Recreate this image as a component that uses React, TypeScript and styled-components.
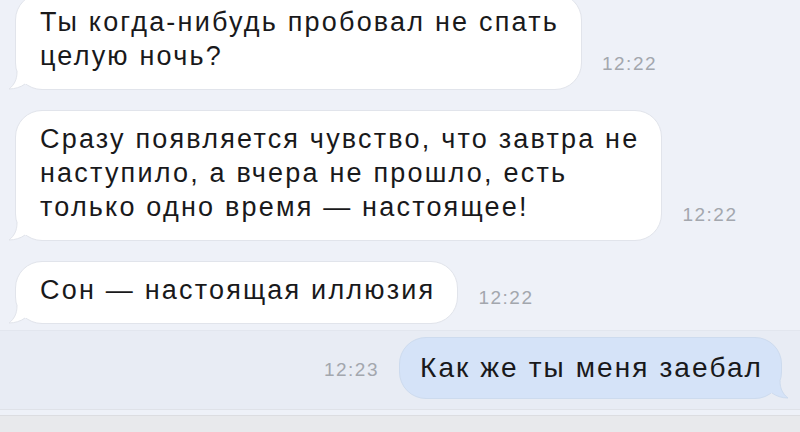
import React from "react";
import styled, { createGlobalStyle } from "styled-components";

const Global = createGlobalStyle`
  html, body { margin: 0; padding: 0; }
  body {
    background: #eef1f8;
    font-family: "Liberation Sans", Arial, sans-serif;
    color: #19191b;
  }
`;

const Screen = styled.div`
  width: 800px;
  height: 432px;
  overflow: hidden;
  display: flex;
  flex-direction: column;
  background: #eef1f8;
`;

const Feed = styled.div`
  display: flex;
  flex-direction: column;
  gap: 20px;
  margin-top: -7px;
  padding: 0 15px;
`;

const Row = styled.div<{ $out?: boolean }>`
  display: flex;
  align-items: flex-end;
  justify-content: ${(p) => (p.$out ? "flex-end" : "flex-start")};
  gap: 20px;
`;

const Bubble = styled.div<{ $out?: boolean }>`
  position: relative;
  background: ${(p) => (p.$out ? "#d5e3f8" : "#ffffff")};
  border: 1px solid ${(p) => (p.$out ? "#cddbee" : "#e1e4eb")};
  border-radius: 27px;
  padding: ${(p) => (p.$out ? "13px 18px 13px 20px" : "11px 22px 16px 24px")};
  font-size: ${(p) => (p.$out ? "28px" : "27px")};
  letter-spacing: ${(p) => (p.$out ? "2.1px" : "2.2px")};
  line-height: 34px;
  white-space: pre-line;
`;

const Tail = styled.svg<{ $out?: boolean }>`
  position: absolute;
  bottom: -1px;
  ${(p) => (p.$out ? "right: -8px; transform: scaleX(-1);" : "left: -8px;")}
  width: 22px;
  height: 18px;
`;

const Time = styled.span<{ $out?: boolean }>`
  font-size: 19px;
  color: #a3a7ae;
  margin-bottom: ${(p) => (p.$out ? "18px" : "15px")};
  letter-spacing: 1.5px;
`;

const OutBand = styled.div`
  margin-top: 6px;
  padding: 6px 18px 10px 15px;
  background: #e8ecf4;
  border-top: 1px solid #e2e6ee;
  border-bottom: 1px solid #dfe2e8;
`;

const BottomBar = styled.div`
  flex: 1;
  margin-top: 5px;
  background: #e8e9ec;
  border-top: 1px solid #dcdde1;
`;

function BubbleTail({ out }: { out?: boolean }) {
  const fill = out ? "#d5e3f8" : "#ffffff";
  const stroke = out ? "#cddbee" : "#e1e4eb";
  return (
    <Tail $out={out} viewBox="0 0 22 18">
      <path d="M9 0 C9 8 6 13 1 17 C7 17 13 15 17 12 L22 12 L22 0 Z" fill={fill} />
      <path d="M9 0 C9 8 6 13 1 17 C7 17 13 15 17 12" fill="none" stroke={stroke} strokeWidth="1" />
    </Tail>
  );
}

const incoming = [
  "Ты когда-нибудь пробовал не спать\nцелую ночь?",
  "Сразу появляется чувство, что завтра не\nнаступило, а вчера не прошло, есть\nтолько одно время — настоящее!",
  "Сон — настоящая иллюзия",
];

export default function App() {
  return (
    <Screen>
      <Global />
      <Feed>
        {incoming.map((t, i) => (
          <Row key={i}>
            <Bubble>
              {t}
              <BubbleTail />
            </Bubble>
            <Time>12:22</Time>
          </Row>
        ))}
      </Feed>
      <OutBand>
        <Row $out>
          <Time $out>12:23</Time>
          <Bubble $out>
            Как же ты меня заебал
            <BubbleTail out />
          </Bubble>
        </Row>
      </OutBand>
      <BottomBar />
    </Screen>
  );
}
